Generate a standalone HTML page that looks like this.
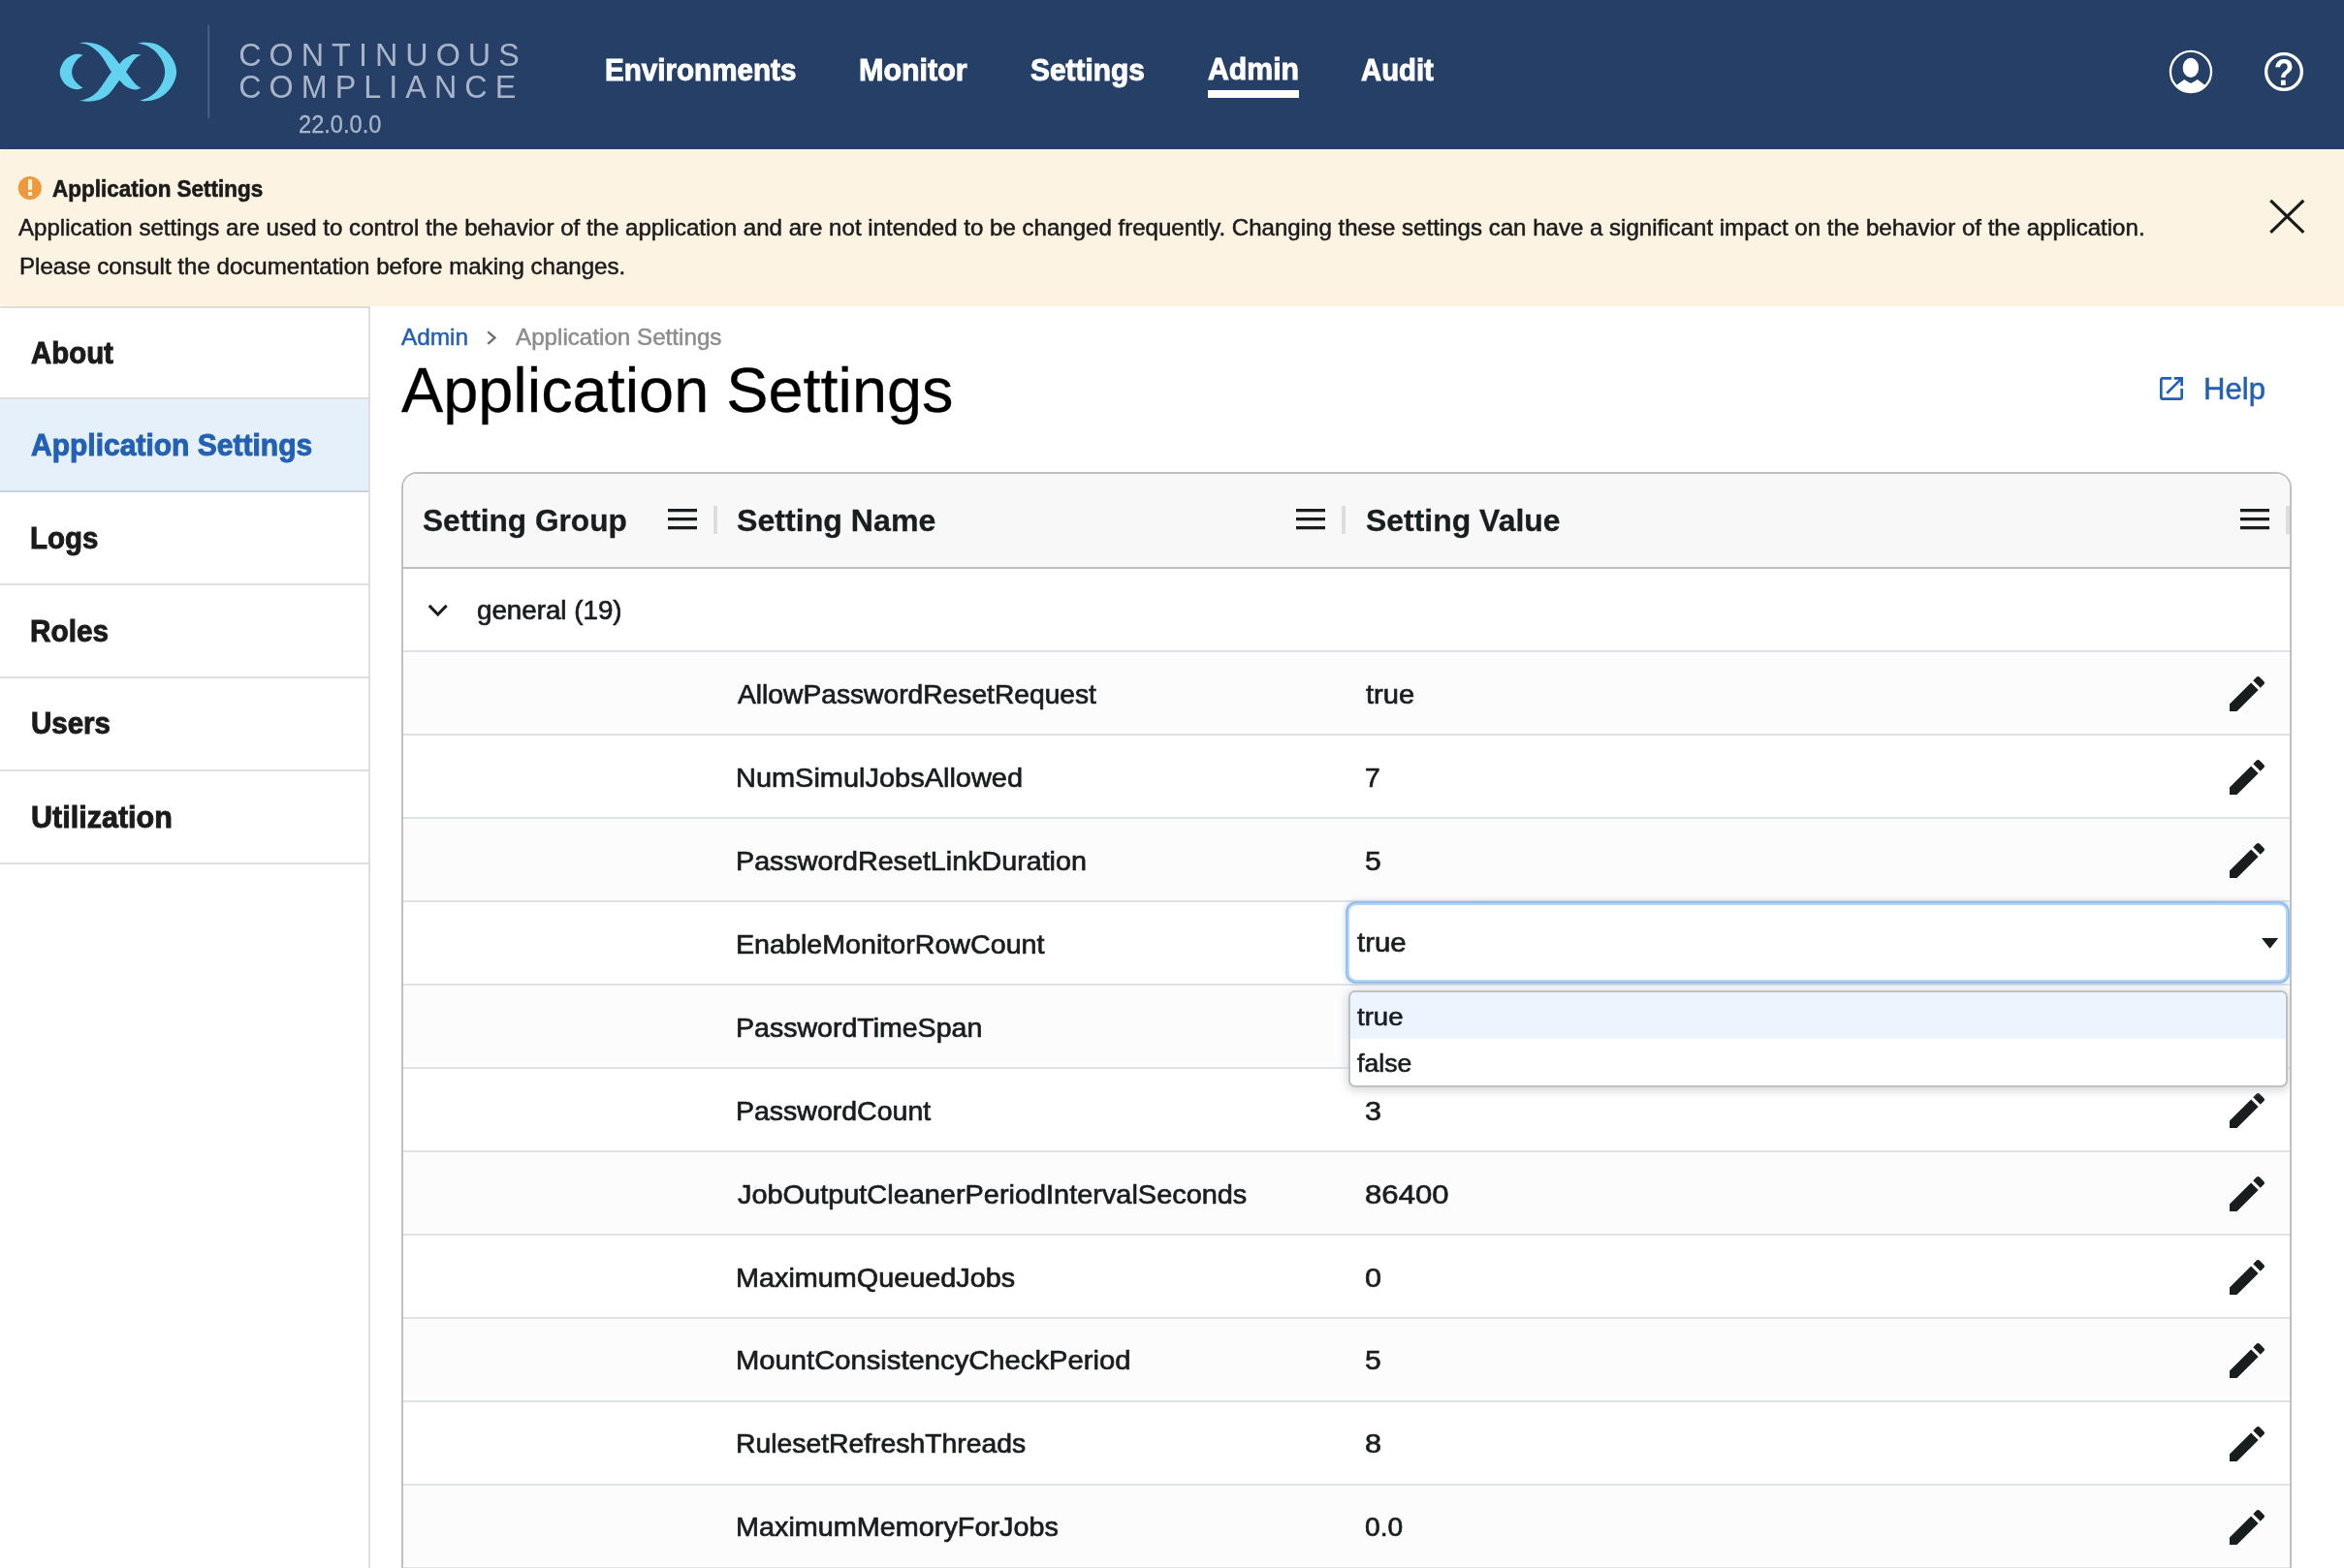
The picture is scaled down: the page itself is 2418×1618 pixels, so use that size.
<!DOCTYPE html>
<html lang="en"><head><meta charset="utf-8"><title>Application Settings</title>
<style>
html,body{margin:0;padding:0}
body{width:2418px;height:1618px;position:relative;overflow:hidden;background:#fff;font-family:"Liberation Sans",sans-serif}
.t{position:absolute;white-space:nowrap;z-index:3;transform-origin:0 50%}
.abs,.pen{position:absolute;z-index:3}
.txt{position:absolute;left:0;top:0;width:2418px;height:1618px;z-index:7;will-change:transform}
header{position:absolute;left:0;top:0;width:2418px;height:154px;background:#263f66}
.banner{position:absolute;left:0;top:154px;width:2418px;height:162px;background:#fdf3e2;border-radius:4px 0 0 5px}
nav.side{position:absolute;left:0;top:316px;width:380px;height:1302px;border-right:2px solid #dedede;border-top:2px solid #dedede;background:#fff}
nav.side div{position:absolute;left:0;width:380px;height:94px;border-bottom:2px solid #dedede}
nav.side div.sel{background:#e5f0fa;border-bottom-color:#c6d3df}
.grid{position:absolute;left:414px;top:487px;width:1946px;height:1200px;border:2px solid #bfc0c2;border-radius:16px;background:#fff;overflow:hidden}
.ghead{position:absolute;left:0;top:0;width:1946px;height:96px;background:#f8f8f8;border-bottom:2px solid #bfc0c2}
.row{position:absolute;left:416px;width:1946px;height:84px;border-top:0;border-bottom:2px solid #dde2eb;z-index:1}
.grow{position:absolute;left:416px;top:587px;width:1946px;height:84px;border-bottom:2px solid #dde2eb;background:#fff;z-index:1}
.sep{position:absolute;top:522px;width:4px;height:29px;background:#dcdede;z-index:3}
.clip{position:absolute;left:416px;top:589px;width:1946px;height:1029px;overflow:hidden;z-index:5}
.select{position:absolute;left:974px;top:343px;width:966px;height:77px;border:2px solid #b6d6f6;border-radius:9px;background:#fff;box-shadow:0 0 0 1.800px #8bbdf0,0 0 5px 3px rgba(110,140,190,.28);z-index:5}
.list{position:absolute;left:974.500px;top:433px;width:965.500px;height:96px;border:2px solid #bfc0c2;border-radius:7px;background:#fff;box-shadow:0 2px 8px 2px rgba(186,191,199,.55);z-index:5;overflow:hidden}
.list .hi{position:absolute;left:0;top:0;width:100%;height:48px;background:#ecf4fe}
</style></head><body>
<header></header>
<svg class="abs" style="left:40px;top:20px" width="200" height="110" viewBox="40 20 200 110">
<g fill="#62d2f0">
<path d="M85.65 56.69 C84.72 56.55 82.02 55.77 80.10 55.84 C78.18 55.91 76.26 56.12 74.13 57.12 C72.00 58.11 69.15 59.89 67.30 61.81 C65.46 63.73 63.96 66.57 63.04 68.63 C62.11 70.70 61.76 72.19 61.76 74.18 C61.76 76.17 62.11 78.45 63.04 80.58 C63.96 82.71 65.46 85.20 67.30 86.98 C69.15 88.76 72.00 90.35 74.13 91.25 C76.26 92.14 78.18 92.43 80.10 92.35 C82.02 92.28 84.72 91.08 85.65 90.82 C84.72 90.11 81.74 88.19 80.10 86.55 C78.47 84.92 76.83 83.07 75.84 81.01 C74.84 78.94 74.13 76.46 74.13 74.18 C74.13 71.91 74.84 69.56 75.84 67.35 C76.83 65.15 78.47 62.73 80.10 60.96 C81.74 59.18 84.72 57.40 85.65 56.69 Z"/><path d="M141.54 44.32 C143.10 44.22 147.65 43.51 150.92 43.72 C154.19 43.93 157.75 44.15 161.16 45.60 C164.57 47.05 168.41 49.58 171.40 52.42 C174.39 55.27 177.30 59.04 179.08 62.66 C180.86 66.29 182.06 70.34 182.06 74.18 C182.06 78.02 180.86 82.07 179.08 85.70 C177.30 89.33 174.39 93.17 171.40 95.94 C168.41 98.71 164.57 100.94 161.16 102.34 C157.75 103.73 153.84 104.02 150.92 104.30 C148.01 104.58 144.88 104.09 143.67 104.04 C145.30 103.40 150.42 101.98 153.48 100.20 C156.54 98.43 159.60 96.08 162.01 93.38 C164.43 90.68 166.64 87.19 167.99 83.99 C169.34 80.79 170.12 77.45 170.12 74.18 C170.12 70.91 169.34 67.57 167.99 64.37 C166.64 61.17 164.43 57.68 162.01 54.98 C159.60 52.28 156.89 49.93 153.48 48.16 C150.07 46.38 143.53 44.96 141.54 44.32 Z"/><path d="M81.38 44.32 C83.02 44.25 88.14 43.68 91.19 43.89 C94.25 44.10 96.88 44.60 99.73 45.60 C102.57 46.59 105.70 48.16 108.26 49.86 C110.82 51.57 112.60 53.13 115.09 55.84 C117.57 58.54 120.70 63.02 123.19 66.08 C125.68 69.13 127.81 71.41 130.02 74.18 C132.22 76.95 134.50 80.37 136.42 82.71 C138.34 85.06 139.97 86.91 141.54 88.26 C143.10 89.61 145.09 90.39 145.80 90.82 C145.09 91.05 143.10 91.97 141.54 92.18 C139.97 92.40 138.41 92.61 136.42 92.10 C134.43 91.59 131.79 90.68 129.59 89.11 C127.39 87.55 125.61 85.20 123.19 82.71 C120.77 80.22 118.00 78.09 115.09 74.18 C112.17 70.27 108.26 62.88 105.70 59.25 C103.14 55.62 102.14 54.56 99.73 52.42 C97.31 50.29 94.25 47.80 91.19 46.45 C88.14 45.10 83.02 44.67 81.38 44.32 Z"/><path d="M145.80 56.69 C144.52 56.58 140.40 55.72 138.12 56.01 C135.85 56.29 134.00 57.43 132.15 58.40 C130.30 59.36 128.52 60.53 127.03 61.81 C125.54 63.09 125.18 64.01 123.19 66.08 C121.20 68.14 117.57 71.19 115.09 74.18 C112.60 77.17 110.53 80.79 108.26 83.99 C105.98 87.19 103.71 90.82 101.43 93.38 C99.16 95.94 96.88 97.82 94.61 99.35 C92.33 100.89 89.99 101.81 87.78 102.59 C85.58 103.38 82.45 103.80 81.38 104.04 C83.02 104.14 87.85 104.78 91.19 104.64 C94.54 104.50 98.30 104.14 101.43 103.19 C104.56 102.24 107.41 100.84 109.97 98.92 C112.53 97.01 114.59 94.37 116.79 91.67 C119.00 88.97 120.99 85.63 123.19 82.71 C125.40 79.80 127.81 77.24 130.02 74.18 C132.22 71.12 134.50 66.93 136.42 64.37 C138.34 61.81 139.97 60.10 141.54 58.82 C143.10 57.54 145.09 57.04 145.80 56.69 Z"/>
</g>
<rect x="214.200" y="26" width="2" height="96" fill="#4c5f82"/>
</svg>
<div class="abs" style="left:1245.800px;top:93px;width:94.200px;height:8px;background:#fff"></div>
<svg class="abs" style="left:2236px;top:50px" width="48" height="48" viewBox="0 0 48 48">
<defs><clipPath id="uc"><circle cx="24" cy="24" r="21"/></clipPath></defs>
<circle cx="24" cy="24" r="21.050" fill="none" stroke="#fff" stroke-width="2.300"/>
<ellipse cx="23.900" cy="19.900" rx="8.200" ry="10.200" fill="#fff"/>
<path clip-path="url(#uc)" fill="#fff" d="M2 48 L2 42 L9.700 37.600 L17.400 32 Q20.500 34.500 23.900 35.900 Q27.300 34.500 30.800 32 L38.100 37.600 L46 42 L46 48Z"/>
</svg>
<svg class="abs" style="left:2334px;top:52px;will-change:transform" width="44" height="44" viewBox="0 0 44 44">
<circle cx="22" cy="22" r="18.350" fill="none" stroke="#fff" stroke-width="3.300"/>
<text transform="translate(22.100 36) scale(.9 1.03)" x="0" y="0" text-anchor="middle" font-family="Liberation Sans" font-weight="700" font-size="37.500" fill="#fff">?</text>
</svg>

<section class="banner"></section>
<svg class="abs" style="left:18px;top:181px" width="26" height="26" viewBox="0 0 26 26"><circle cx="12.800" cy="12.900" r="12" fill="#f0983a"/><rect x="11" y="4" width="4.100" height="10.900" fill="#fdf3e2"/><rect x="11" y="17" width="4.100" height="3.900" fill="#fdf3e2"/></svg>
<svg class="abs" style="left:2336px;top:200px" width="46" height="46" viewBox="0 0 46 46"><path d="M6.300 6.800 L40.300 39.900 M40.300 6.800 L6.300 39.900" stroke="#1b1b1b" stroke-width="3.200" fill="none"/></svg>

<nav class="side">
<div style="top:0;height:92px"></div><div class="sel" style="top:94px"></div><div style="top:190px"></div><div style="top:286px"></div><div style="top:382px"></div><div style="top:478px"></div>
</nav>

<svg class="abs" style="left:500px;top:338px" width="16" height="22" viewBox="0 0 16 22"><path d="M3.300 4.300 L10.500 10.600 L3.300 16.900" fill="none" stroke="#6b6b6b" stroke-width="2.200"/></svg>
<svg class="abs" style="left:2224px;top:384.800px" width="32" height="32" viewBox="0 0 24 24"><path fill="#2360b3" d="M19 19H5V5h7V3H5c-1.110 0-2 .900-2 2v14c0 1.100.890 2 2 2h14c1.100 0 2-.900 2-2v-7h-2v7zM14 3v2h3.590l-9.830 9.830 1.410 1.410L19 6.410V10h2V3h-7z"/></svg>

<main class="grid"><div class="ghead"></div></main>
<svg class="abs" style="left:688.8px;top:524.8px" width="30" height="22" viewBox="0 0 30 22"><path fill="#181d1f" d="M0 0h30v3.200H0zM0 9.050h30v3.200H0zM0 18.100h30v3.200H0z"/></svg><svg class="abs" style="left:1337px;top:524.8px" width="30" height="22" viewBox="0 0 30 22"><path fill="#181d1f" d="M0 0h30v3.200H0zM0 9.050h30v3.200H0zM0 18.100h30v3.200H0z"/></svg><svg class="abs" style="left:2311px;top:524.8px" width="30" height="22" viewBox="0 0 30 22"><path fill="#181d1f" d="M0 0h30v3.200H0zM0 9.050h30v3.200H0zM0 18.100h30v3.200H0z"/></svg>
<div class="sep" style="left:736px"></div><div class="sep" style="left:1384.200px"></div><div class="sep" style="left:2358px"></div>
<div class="grow"></div>
<svg class="abs" style="left:438px;top:620px" width="28" height="20" viewBox="0 0 28 20"><path d="M4.800 4.900 L13.700 14 L22.600 4.900" fill="none" stroke="#181d1f" stroke-width="3"/></svg>
<div class="row" style="top:673px;background:#fcfcfc"></div><svg class="pen" style="left:2293.8px;top:691.8px" width="48" height="48" viewBox="0 0 24 24"><path fill="#181d1f" d="M3 17.25V21h3.750L17.810 9.940l-3.750-3.750L3 17.250zM20.710 7.040c.390-.390.390-1.020 0-1.410l-2.340-2.340c-.390-.390-1.020-.390-1.410 0l-1.830 1.830 3.750 3.750 1.830-1.830z"/></svg><div class="row" style="top:759px;background:#ffffff"></div><svg class="pen" style="left:2293.8px;top:777.8px" width="48" height="48" viewBox="0 0 24 24"><path fill="#181d1f" d="M3 17.25V21h3.750L17.810 9.940l-3.750-3.750L3 17.250zM20.710 7.040c.390-.390.390-1.020 0-1.410l-2.340-2.340c-.390-.390-1.020-.390-1.410 0l-1.830 1.830 3.750 3.750 1.830-1.830z"/></svg><div class="row" style="top:845px;background:#fcfcfc"></div><svg class="pen" style="left:2293.8px;top:863.8px" width="48" height="48" viewBox="0 0 24 24"><path fill="#181d1f" d="M3 17.25V21h3.750L17.810 9.940l-3.750-3.750L3 17.250zM20.710 7.040c.390-.390.390-1.020 0-1.410l-2.340-2.340c-.390-.390-1.020-.390-1.410 0l-1.830 1.830 3.750 3.750 1.830-1.830z"/></svg><div class="row" style="top:931px;background:#ffffff"></div><div class="row" style="top:1017px;background:#fcfcfc"></div><div class="row" style="top:1103px;background:#ffffff"></div><svg class="pen" style="left:2293.8px;top:1121.8px" width="48" height="48" viewBox="0 0 24 24"><path fill="#181d1f" d="M3 17.25V21h3.750L17.810 9.940l-3.750-3.750L3 17.250zM20.710 7.040c.390-.390.390-1.020 0-1.410l-2.340-2.340c-.390-.390-1.020-.390-1.410 0l-1.830 1.830 3.750 3.750 1.830-1.830z"/></svg><div class="row" style="top:1189px;background:#fcfcfc"></div><svg class="pen" style="left:2293.8px;top:1207.8px" width="48" height="48" viewBox="0 0 24 24"><path fill="#181d1f" d="M3 17.25V21h3.750L17.810 9.940l-3.750-3.750L3 17.250zM20.710 7.040c.390-.390.390-1.020 0-1.410l-2.340-2.340c-.390-.390-1.020-.390-1.410 0l-1.830 1.830 3.750 3.750 1.830-1.830z"/></svg><div class="row" style="top:1275px;background:#ffffff"></div><svg class="pen" style="left:2293.8px;top:1293.8px" width="48" height="48" viewBox="0 0 24 24"><path fill="#181d1f" d="M3 17.25V21h3.750L17.810 9.940l-3.750-3.750L3 17.250zM20.710 7.040c.390-.390.390-1.020 0-1.410l-2.340-2.340c-.390-.390-1.020-.390-1.410 0l-1.830 1.830 3.750 3.750 1.830-1.830z"/></svg><div class="row" style="top:1361px;background:#fcfcfc"></div><svg class="pen" style="left:2293.8px;top:1379.8px" width="48" height="48" viewBox="0 0 24 24"><path fill="#181d1f" d="M3 17.25V21h3.750L17.810 9.940l-3.750-3.750L3 17.250zM20.710 7.040c.390-.390.390-1.020 0-1.410l-2.340-2.340c-.390-.390-1.020-.390-1.410 0l-1.830 1.830 3.750 3.750 1.830-1.830z"/></svg><div class="row" style="top:1447px;background:#ffffff"></div><svg class="pen" style="left:2293.8px;top:1465.8px" width="48" height="48" viewBox="0 0 24 24"><path fill="#181d1f" d="M3 17.25V21h3.750L17.810 9.940l-3.750-3.750L3 17.250zM20.710 7.040c.390-.390.390-1.020 0-1.410l-2.340-2.340c-.390-.390-1.020-.390-1.410 0l-1.830 1.830 3.750 3.750 1.830-1.830z"/></svg><div class="row" style="top:1533px;background:#fcfcfc"></div><svg class="pen" style="left:2293.8px;top:1551.8px" width="48" height="48" viewBox="0 0 24 24"><path fill="#181d1f" d="M3 17.25V21h3.750L17.810 9.940l-3.750-3.750L3 17.250zM20.710 7.040c.390-.390.390-1.020 0-1.410l-2.340-2.340c-.390-.390-1.020-.390-1.410 0l-1.830 1.830 3.750 3.750 1.830-1.830z"/></svg>
<div class="clip"><div class="select"></div>
<svg class="abs" style="left:1917.200px;top:378.500px;z-index:6" width="18" height="11" viewBox="0 0 18 11"><path d="M0 0H17.200L8.600 10.700Z" fill="#181d1f"/></svg>
<div class="list"><div class="hi"></div></div></div>
<div class="txt"><div class="t" style="left:246.20px;top:38.20px;font-size:32.3px;line-height:39px;font-weight:400;color:#a9b4c8;letter-spacing:8.049px;">CONTINUOUS</div><div class="t" style="left:246.20px;top:70.70px;font-size:32.3px;line-height:39px;font-weight:400;color:#a9b4c8;letter-spacing:8.054px;">COMPLIANCE</div><div class="t" style="left:308.03px;top:113.15px;font-size:25.56px;line-height:31px;font-weight:400;color:#a9b4c8;transform:scaleX(0.9240);-webkit-text-stroke:0.32px #a9b4c8;">22.0.0.0</div><div class="t" style="left:623.76px;top:53.75px;font-size:31.29px;line-height:38px;font-weight:700;color:#fff;transform:scaleX(0.9462);-webkit-text-stroke:0.95px #fff;">Environments</div><div class="t" style="left:885.80px;top:53.75px;font-size:31.29px;line-height:38px;font-weight:700;color:#fff;transform:scaleX(0.9743);-webkit-text-stroke:0.92px #fff;">Monitor</div><div class="t" style="left:1063.45px;top:53.75px;font-size:31.29px;line-height:38px;font-weight:700;color:#fff;transform:scaleX(0.9553);-webkit-text-stroke:0.94px #fff;">Settings</div><div class="t" style="left:1246.25px;top:52.95px;font-size:31.29px;line-height:38px;font-weight:700;color:#fff;transform:scaleX(0.9667);-webkit-text-stroke:0.93px #fff;">Admin</div><div class="t" style="left:1404.15px;top:53.75px;font-size:31.29px;line-height:38px;font-weight:700;color:#fff;transform:scaleX(0.9367);-webkit-text-stroke:0.96px #fff;">Audit</div><div class="t" style="left:54.00px;top:179.90px;font-size:24.13px;line-height:29px;font-weight:700;color:#1b1b1b;transform:scaleX(0.9317);-webkit-text-stroke:0.64px #1b1b1b;">Application Settings</div><div class="t" style="left:19.45px;top:219.95px;font-size:23.87px;line-height:29px;font-weight:400;color:#1b1b1b;transform:scaleX(1.0086);-webkit-text-stroke:0.50px #1b1b1b;">Application settings are used to control the behavior of the application and are not intended to be changed frequently. Changing these settings can have a significant impact on the behavior of the application.</div><div class="t" style="left:19.64px;top:260.15px;font-size:23.87px;line-height:29px;font-weight:400;color:#1b1b1b;transform:scaleX(1.0094);-webkit-text-stroke:0.50px #1b1b1b;">Please consult the documentation before making changes.</div><div class="t" style="left:32.15px;top:345.05px;font-size:31.49px;line-height:38px;font-weight:700;color:#1b1b1b;transform:scaleX(0.9340);-webkit-text-stroke:0.96px #1b1b1b;">About</div><div class="t" style="left:32.15px;top:439.75px;font-size:31.49px;line-height:38px;font-weight:700;color:#2360b3;transform:scaleX(0.9534);-webkit-text-stroke:0.94px #2360b3;">Application Settings</div><div class="t" style="left:31.08px;top:536.35px;font-size:31.49px;line-height:38px;font-weight:700;color:#1b1b1b;transform:scaleX(0.9354);-webkit-text-stroke:0.96px #1b1b1b;">Logs</div><div class="t" style="left:31.06px;top:631.75px;font-size:31.49px;line-height:38px;font-weight:700;color:#1b1b1b;transform:scaleX(0.9444);-webkit-text-stroke:0.95px #1b1b1b;">Roles</div><div class="t" style="left:32.01px;top:727.45px;font-size:31.49px;line-height:38px;font-weight:700;color:#1b1b1b;transform:scaleX(0.9371);-webkit-text-stroke:0.96px #1b1b1b;">Users</div><div class="t" style="left:31.98px;top:823.65px;font-size:31.49px;line-height:38px;font-weight:700;color:#1b1b1b;transform:scaleX(0.9698);-webkit-text-stroke:0.93px #1b1b1b;">Utilization</div><div class="t" style="left:414.35px;top:333.25px;font-size:23.87px;line-height:29px;font-weight:400;color:#2360b3;transform:scaleX(1.0217);-webkit-text-stroke:0.49px #2360b3;">Admin</div><div class="t" style="left:531.55px;top:333.25px;font-size:23.87px;line-height:29px;font-weight:400;color:#8c8c8c;transform:scaleX(1.0137);-webkit-text-stroke:0.49px #8c8c8c;">Application Settings</div><div class="t" style="left:414.25px;top:364.05px;font-size:65.16px;line-height:78px;font-weight:400;color:#000;transform:scaleX(0.9951);-webkit-text-stroke:0.30px #000;">Application Settings</div><div class="t" style="left:2272.69px;top:381.95px;font-size:31.67px;line-height:38px;font-weight:400;color:#2360b3;transform:scaleX(0.9824);-webkit-text-stroke:0.51px #2360b3;">Help</div><div class="t" style="left:436.05px;top:518.15px;font-size:32.06px;line-height:38px;font-weight:700;color:#181d1f;transform:scaleX(0.9866);-webkit-text-stroke:0.30px #181d1f;">Setting Group</div><div class="t" style="left:759.85px;top:518.15px;font-size:32.06px;line-height:38px;font-weight:700;color:#181d1f;transform:scaleX(1.0031);-webkit-text-stroke:0.30px #181d1f;">Setting Name</div><div class="t" style="left:1408.55px;top:518.15px;font-size:32.06px;line-height:38px;font-weight:700;color:#181d1f;transform:scaleX(0.9965);-webkit-text-stroke:0.30px #181d1f;">Setting Value</div><div class="t" style="left:491.97px;top:612.35px;font-size:28.28px;line-height:34px;font-weight:400;color:#181d1f;transform:scaleX(0.9813);-webkit-text-stroke:0.71px #181d1f;">general (19)</div><div class="t" style="left:760.95px;top:699.05px;font-size:28.28px;line-height:34px;font-weight:400;color:#181d1f;transform:scaleX(0.9978);-webkit-text-stroke:0.70px #181d1f;">AllowPasswordResetRequest</div><div class="t" style="left:758.90px;top:784.98px;font-size:28.28px;line-height:34px;font-weight:400;color:#181d1f;transform:scaleX(1.0241);-webkit-text-stroke:0.68px #181d1f;">NumSimulJobsAllowed</div><div class="t" style="left:758.92px;top:870.91px;font-size:28.28px;line-height:34px;font-weight:400;color:#181d1f;transform:scaleX(1.0147);-webkit-text-stroke:0.69px #181d1f;">PasswordResetLinkDuration</div><div class="t" style="left:758.92px;top:956.84px;font-size:28.28px;line-height:34px;font-weight:400;color:#181d1f;transform:scaleX(1.0135);-webkit-text-stroke:0.69px #181d1f;">EnableMonitorRowCount</div><div class="t" style="left:758.93px;top:1042.77px;font-size:28.28px;line-height:34px;font-weight:400;color:#181d1f;transform:scaleX(1.0094);-webkit-text-stroke:0.69px #181d1f;">PasswordTimeSpan</div><div class="t" style="left:758.93px;top:1128.70px;font-size:28.28px;line-height:34px;font-weight:400;color:#181d1f;transform:scaleX(1.0082);-webkit-text-stroke:0.69px #181d1f;">PasswordCount</div><div class="t" style="left:760.95px;top:1214.63px;font-size:28.28px;line-height:34px;font-weight:400;color:#181d1f;transform:scaleX(1.0224);-webkit-text-stroke:0.68px #181d1f;">JobOutputCleanerPeriodIntervalSeconds</div><div class="t" style="left:758.91px;top:1300.56px;font-size:28.28px;line-height:34px;font-weight:400;color:#181d1f;transform:scaleX(1.0187);-webkit-text-stroke:0.69px #181d1f;">MaximumQueuedJobs</div><div class="t" style="left:758.88px;top:1386.49px;font-size:28.28px;line-height:34px;font-weight:400;color:#181d1f;transform:scaleX(1.0332);-webkit-text-stroke:0.68px #181d1f;">MountConsistencyCheckPeriod</div><div class="t" style="left:758.95px;top:1472.42px;font-size:28.28px;line-height:34px;font-weight:400;color:#181d1f;transform:scaleX(1.0018);-webkit-text-stroke:0.70px #181d1f;">RulesetRefreshThreads</div><div class="t" style="left:758.91px;top:1558.35px;font-size:28.28px;line-height:34px;font-weight:400;color:#181d1f;transform:scaleX(1.0190);-webkit-text-stroke:0.69px #181d1f;">MaximumMemoryForJobs</div><div class="t" style="left:1409.05px;top:699.05px;font-size:28.28px;line-height:34px;font-weight:400;color:#181d1f;transform:scaleX(1.0295);-webkit-text-stroke:0.68px #181d1f;">true</div><div class="t" style="left:1408.05px;top:784.98px;font-size:28.28px;line-height:34px;font-weight:400;color:#181d1f;transform:scaleX(1.0000);-webkit-text-stroke:0.70px #181d1f;">7</div><div class="t" style="left:1407.99px;top:870.91px;font-size:28.28px;line-height:34px;font-weight:400;color:#181d1f;transform:scaleX(1.0643);-webkit-text-stroke:0.66px #181d1f;">5</div><div class="t" style="left:1407.96px;top:1128.70px;font-size:28.28px;line-height:34px;font-weight:400;color:#181d1f;transform:scaleX(1.0857);-webkit-text-stroke:0.64px #181d1f;">3</div><div class="t" style="left:1407.95px;top:1214.63px;font-size:28.28px;line-height:34px;font-weight:400;color:#181d1f;transform:scaleX(1.1017);-webkit-text-stroke:0.64px #181d1f;">86400</div><div class="t" style="left:1407.96px;top:1300.56px;font-size:28.28px;line-height:34px;font-weight:400;color:#181d1f;transform:scaleX(1.0857);-webkit-text-stroke:0.64px #181d1f;">0</div><div class="t" style="left:1407.99px;top:1386.49px;font-size:28.28px;line-height:34px;font-weight:400;color:#181d1f;transform:scaleX(1.0643);-webkit-text-stroke:0.66px #181d1f;">5</div><div class="t" style="left:1407.96px;top:1472.42px;font-size:28.28px;line-height:34px;font-weight:400;color:#181d1f;transform:scaleX(1.0857);-webkit-text-stroke:0.64px #181d1f;">8</div><div class="t" style="left:1408.05px;top:1558.35px;font-size:28.28px;line-height:34px;font-weight:400;color:#181d1f;transform:scaleX(0.9981);-webkit-text-stroke:0.70px #181d1f;">0.0</div><div class="t" style="left:1400.45px;top:954.95px;font-size:28.28px;line-height:34px;font-weight:400;color:#181d1f;transform:scaleX(1.0399);-webkit-text-stroke:0.67px #181d1f;z-index:6;">true</div><div class="t" style="left:1400.40px;top:1032.90px;font-size:26.43px;line-height:32px;font-weight:400;color:#181d1f;transform:scaleX(1.0438);-webkit-text-stroke:0.57px #181d1f;z-index:6;">true</div><div class="t" style="left:1400.40px;top:1080.50px;font-size:26.43px;line-height:32px;font-weight:400;color:#181d1f;transform:scaleX(1.0088);-webkit-text-stroke:0.59px #181d1f;z-index:6;">false</div></div>
</body></html>
